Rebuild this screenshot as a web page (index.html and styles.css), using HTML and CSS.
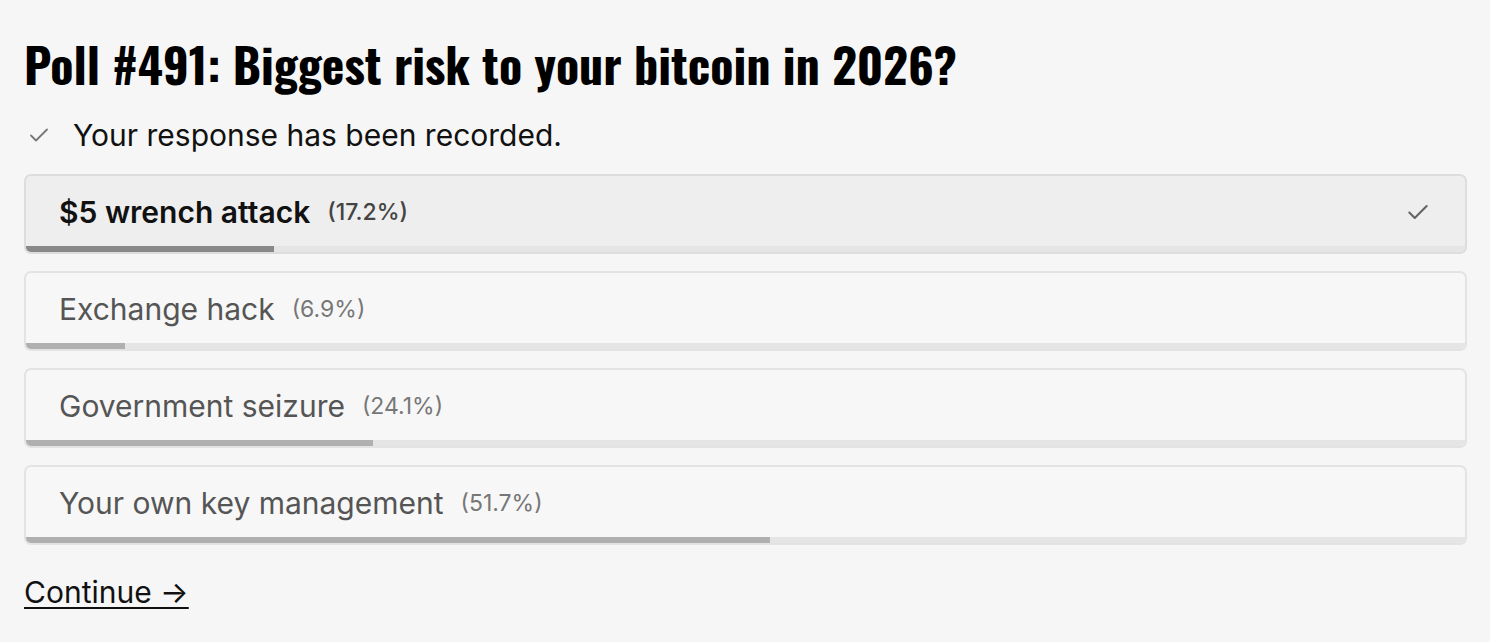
FILE: index.html
```html
<!DOCTYPE html>
<html lang="en">
<head>
    <meta charset="UTF-8">
    <meta name="viewport" content="width=device-width, initial-scale=1.0">
    <title>Poll #491</title>
    <link rel="stylesheet" href="styles.css">
</head>
<body>

    <main class="poll">
        <h1 class="poll-title">Poll #491: Biggest risk to your bitcoin in 2026?</h1>

        <p class="poll-status">
            <svg class="status-check" viewBox="0 0 24 24" width="24" height="24"><path d="M4 12.5l5 5L20 6.5" fill="none" stroke="currentColor" stroke-width="1.8" stroke-linecap="round" stroke-linejoin="round"/></svg>
            Your response has been recorded.
        </p>

        <ul class="poll-options">
            <li class="option option-chosen">
                <div class="option-row">
                    <span class="option-label">$5 wrench attack</span>
                    <span class="option-pct">(17.2%)</span>
                    <svg class="option-check" viewBox="0 0 24 24" width="26" height="26"><path d="M4 12.5l5 5L20 6.5" fill="none" stroke="currentColor" stroke-width="2" stroke-linecap="round" stroke-linejoin="round"/></svg>
                </div>
                <div class="option-bar"><div class="option-fill" style="width: 17.2%"></div></div>
            </li>
            <li class="option">
                <div class="option-row">
                    <span class="option-label">Exchange hack</span>
                    <span class="option-pct">(6.9%)</span>
                </div>
                <div class="option-bar"><div class="option-fill" style="width: 6.9%"></div></div>
            </li>
            <li class="option">
                <div class="option-row">
                    <span class="option-label">Government seizure</span>
                    <span class="option-pct">(24.1%)</span>
                </div>
                <div class="option-bar"><div class="option-fill" style="width: 24.1%"></div></div>
            </li>
            <li class="option">
                <div class="option-row">
                    <span class="option-label">Your own key management</span>
                    <span class="option-pct">(51.7%)</span>
                </div>
                <div class="option-bar"><div class="option-fill" style="width: 51.7%"></div></div>
            </li>
        </ul>

        <a class="poll-continue" href="#">Continue &rarr;</a>
    </main>

</body>
</html>
```

FILE: styles.css
```css
body {
    margin: 0;
    padding: 0;
    background-color: #f6f6f6;
    color: #111;
    font-family: Inter, 'Noto Sans', sans-serif;
}

.poll {
    padding: 35px 23px 20px 24px;
}

.poll-title {
    margin: 0;
    font-family: Oswald, 'Liberation Sans Narrow', 'DejaVu Sans Condensed', sans-serif;
    font-weight: 700;
    font-size: 48px;
    line-height: 1.2;
    color: #000;
}

.poll-status {
    display: flex;
    align-items: center;
    gap: 22px;
    margin: 24px 0 21px 3px;
    font-size: 30px;
    line-height: 36px;
    color: #111;
}
.status-check {
    color: #777;
}

.poll-options {
    list-style: none;
    margin: 0;
    padding: 0;
    display: flex;
    flex-direction: column;
    gap: 17px;
}

.option {
    border: 2px solid #e3e3e3;
    border-radius: 7px;
    overflow: hidden;
    background-color: #f7f7f7;
}
.option-chosen {
    background-color: #eeeeee;
    border-color: #dddddd;
}

.option-row {
    display: flex;
    align-items: center;
    height: 67px;
    padding: 3px 33px 0;
    gap: 17px;
}
.option-label {
    font-size: 30px;
    color: #555;
}
.option-pct {
    font-size: 23px;
    color: #777;
}
.option-chosen .option-label {
    font-weight: 600;
    color: #111;
}
.option-chosen .option-pct {
    font-weight: 500;
    color: #444;
}
.option-check {
    margin-left: auto;
    margin-right: 1px;
    color: #666;
}

.option-bar {
    height: 6px;
    background-color: #e5e5e5;
}
.option-fill {
    height: 100%;
    background-color: #b0b0b0;
}
.option-chosen .option-fill {
    background-color: #888;
}

.poll-continue {
    display: inline-block;
    margin-top: 29px;
    font-size: 30px;
    line-height: 36px;
    color: #111;
    text-decoration: underline;
    text-decoration-thickness: 2px;
    text-underline-offset: 4px;
}
```
